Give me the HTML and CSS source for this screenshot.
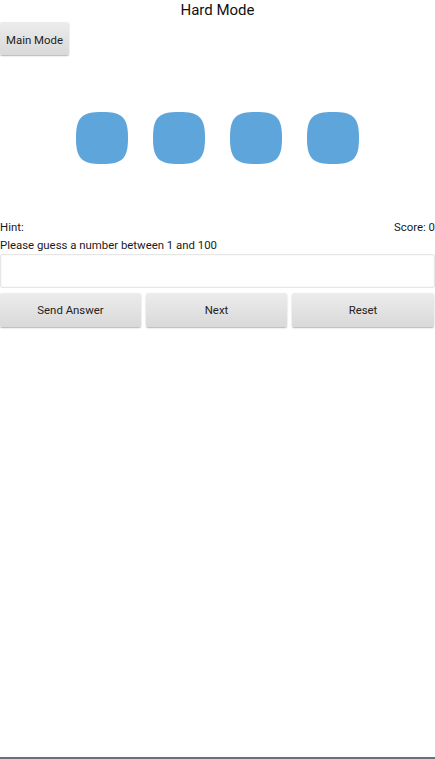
FILE: index.html
```html
<!DOCTYPE html>
<html>
<head>
<meta charset="utf-8">
<link rel="stylesheet" href="styles.css">
</head>
<body>
<div class="app">
  <header class="title">Hard Mode</header>
  <div class="top-row">
    <button class="btn btn-main">Main Mode</button>
  </div>
  <div class="tiles">
    <svg class="tile" viewBox="0 0 52 52"><path d="M26,0 C46,0 52,5 52,26 C52,47 46,52 26,52 C6,52 0,47 0,26 C0,5 6,0 26,0Z"/></svg>
    <svg class="tile" viewBox="0 0 52 52"><path d="M26,0 C46,0 52,5 52,26 C52,47 46,52 26,52 C6,52 0,47 0,26 C0,5 6,0 26,0Z"/></svg>
    <svg class="tile" viewBox="0 0 52 52"><path d="M26,0 C46,0 52,5 52,26 C52,47 46,52 26,52 C6,52 0,47 0,26 C0,5 6,0 26,0Z"/></svg>
    <svg class="tile" viewBox="0 0 52 52"><path d="M26,0 C46,0 52,5 52,26 C52,47 46,52 26,52 C6,52 0,47 0,26 C0,5 6,0 26,0Z"/></svg>
  </div>
  <div class="info-row">
    <span>Hint:</span>
    <span>Score: 0</span>
  </div>
  <div class="prompt">Please guess a number between 1 and 100</div>
  <input class="answer" type="text">
  <div class="actions">
    <button class="btn">Send Answer</button>
    <button class="btn">Next</button>
    <button class="btn">Reset</button>
  </div>
</div>
<div class="bottom-bar"></div>
</body>
</html>
```
FILE: styles.css
```css
html, body {
  margin: 0;
  padding: 0;
  background: #ffffff;
}
body {
  font-family: Roboto, "Liberation Sans", Arial, sans-serif;
  color: #1a1a1a;
  width: 435px;
  height: 759px;
  position: relative;
  overflow: hidden;
}
.app {
  display: flex;
  flex-direction: column;
}
.title {
  text-align: center;
  font-size: 15px;
  line-height: 20px;
  height: 22px;
  color: #111;
}
.top-row {
  display: flex;
}
.btn {
  font-family: Roboto, "Liberation Sans", Arial, sans-serif;
  font-size: 11.4px;
  color: #222;
  border: none;
  border-radius: 2px;
  background: linear-gradient(#ececec, #d9d9d9);
  box-shadow: 0 1px 1.5px rgba(0,0,0,0.3);
  padding: 0;
  margin: 0;
  cursor: pointer;
}
.btn-main {
  width: 69px;
  height: 33px;
  padding-top: 2px;
}
.tiles {
  display: flex;
  justify-content: center;
  gap: 25px;
  margin-top: 57px;
  padding-right: 1px;
}
.tile {
  width: 52px;
  height: 52px;
  display: block;
}
.tile path {
  fill: #5ea5db;
}
.info-row {
  display: flex;
  justify-content: space-between;
  font-size: 11.4px;
  line-height: 15px;
  margin-top: 56px;
}
.prompt {
  font-size: 11.4px;
  line-height: 15px;
  margin-top: 3px;
}
.answer {
  box-sizing: border-box;
  width: 435px;
  height: 34px;
  margin: 1px 0 0 0;
  border: 1px solid #e6e6e6;
  border-radius: 2px;
  box-shadow: 0 0 2px rgba(0,0,0,0.08) inset;
  outline: none;
  font-size: 13px;
  padding: 0 6px;
}
.actions {
  display: grid;
  grid-template-columns: 141px 141px 142px;
  gap: 5px;
  margin-top: 5px;
}
.actions .btn {
  height: 34px;
}
.bottom-bar {
  position: absolute;
  left: 0;
  right: 0;
  bottom: 0;
  height: 2px;
  background: #6b6f7b;
}
```
